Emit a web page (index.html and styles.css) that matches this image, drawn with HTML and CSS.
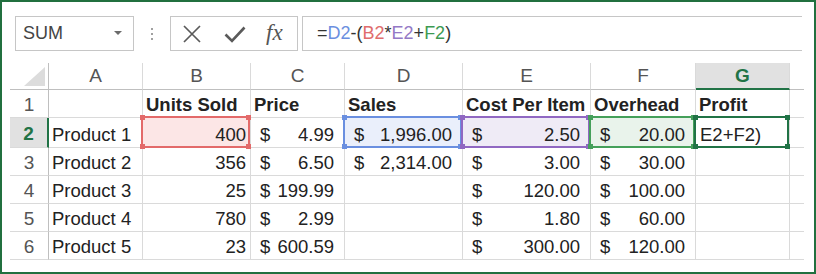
FILE: index.html
```html
<!DOCTYPE html>
<html lang="en">
<head>
    <meta charset="UTF-8">
    <title>Profit formula</title>
    <link rel="stylesheet" href="styles.css">
</head>
<body>
    <div class="frame">
        <div class="toolbar">
            <div class="namebox">
                <span>SUM</span>
                <svg class="caret" width="8" height="5" viewBox="0 0 8 5"><path d="M0 0 L8 0 L4 4 Z" fill="#6b6b6b"/></svg>
            </div>
            <div class="grip"><i></i><i></i><i></i></div>
            <div class="fxbox">
                <svg class="cancel" width="20" height="20" viewBox="0 0 20 20"><path d="M2 2 L18 18 M18 2 L2 18" stroke="#5a5a5a" stroke-width="1.7" fill="none"/></svg>
                <svg class="enter" width="22" height="18" viewBox="0 0 22 18"><path d="M1.5 8.5 L8 15 L20.5 1.5" stroke="#5a5a5a" stroke-width="2.6" fill="none"/></svg>
                <span class="fx">fx</span>
            </div>
            <div class="formula">=<span class="f-blue">D2</span>-(<span class="f-red">B2</span>*<span class="f-purple">E2</span>+<span class="f-green">F2</span>)</div>
        </div>

        <div class="sheet">
            <!-- column headers -->
            <div class="hd corner"><svg width="21" height="19" viewBox="0 0 21 19"><path d="M21 0 L21 19 L0 19 Z" fill="#dcdcdc"/></svg></div>
            <div class="hd">A</div>
            <div class="hd">B</div>
            <div class="hd">C</div>
            <div class="hd">D</div>
            <div class="hd">E</div>
            <div class="hd">F</div>
            <div class="hd sel">G</div>
            <div class="hd last"></div>

            <!-- row 1 -->
            <div class="rh">1</div>
            <div class="c"></div>
            <div class="c b">Units Sold</div>
            <div class="c b">Price</div>
            <div class="c b">Sales</div>
            <div class="c b">Cost Per Item</div>
            <div class="c b">Overhead</div>
            <div class="c b">Profit</div>
            <div class="c last"></div>

            <!-- row 2 -->
            <div class="rh sel">2</div>
            <div class="c">Product 1</div>
            <div class="c num ref red">400</div>
            <div class="c acct"><span>$</span><span>4.99</span></div>
            <div class="c acct ref blue"><span>$</span><span>1,996.00</span></div>
            <div class="c acct ref purple"><span>$</span><span>2.50</span></div>
            <div class="c acct ref green"><span>$</span><span>20.00</span></div>
            <div class="c ref active">E2+F2)</div>
            <div class="c last"></div>

            <!-- row 3 -->
            <div class="rh">3</div>
            <div class="c">Product 2</div>
            <div class="c num">356</div>
            <div class="c acct"><span>$</span><span>6.50</span></div>
            <div class="c acct"><span>$</span><span>2,314.00</span></div>
            <div class="c acct"><span>$</span><span>3.00</span></div>
            <div class="c acct"><span>$</span><span>30.00</span></div>
            <div class="c"></div>
            <div class="c last"></div>

            <!-- row 4 -->
            <div class="rh">4</div>
            <div class="c">Product 3</div>
            <div class="c num">25</div>
            <div class="c acct"><span>$</span><span>199.99</span></div>
            <div class="c"></div>
            <div class="c acct"><span>$</span><span>120.00</span></div>
            <div class="c acct"><span>$</span><span>100.00</span></div>
            <div class="c"></div>
            <div class="c last"></div>

            <!-- row 5 -->
            <div class="rh">5</div>
            <div class="c">Product 4</div>
            <div class="c num">780</div>
            <div class="c acct"><span>$</span><span>2.99</span></div>
            <div class="c"></div>
            <div class="c acct"><span>$</span><span>1.80</span></div>
            <div class="c acct"><span>$</span><span>60.00</span></div>
            <div class="c"></div>
            <div class="c last"></div>

            <!-- row 6 -->
            <div class="rh">6</div>
            <div class="c">Product 5</div>
            <div class="c num">23</div>
            <div class="c acct"><span>$</span><span>600.59</span></div>
            <div class="c"></div>
            <div class="c acct"><span>$</span><span>300.00</span></div>
            <div class="c acct"><span>$</span><span>120.00</span></div>
            <div class="c"></div>
            <div class="c last"></div>
        </div>
    </div>
</body>
</html>
```

FILE: styles.css
```css
body {
    margin: 0;
    background: #fff;
    font-family: 'Liberation Sans', Arial, sans-serif;
}

.frame {
    width: 816px;
    height: 274px;
    box-sizing: border-box;
    border: 2px solid #21703f;
    background: #fff;
    overflow: hidden;
}

/* formula bar */

.toolbar {
    display: flex;
    height: 35px;
    margin: 14px 0 0 13px;
}

.namebox {
    width: 119px;
    box-sizing: border-box;
    border: 1px solid #c6c6c6;
    display: flex;
    align-items: center;
    justify-content: space-between;
    padding: 0 11px 0 7px;
    font-size: 18px;
    color: #444;
}

.grip {
    width: 36px;
    display: flex;
    flex-direction: column;
    justify-content: center;
    align-items: center;
    gap: 3px;
}

.grip i {
    width: 2px;
    height: 2px;
    background: #a0a0a0;
}

.fxbox {
    position: relative;
    width: 128px;
    box-sizing: border-box;
    border: 1px solid #c6c6c6;
    display: flex;
    align-items: center;
    padding-left: 11px;
}

.cancel {
    margin-right: 22px;
}

.enter {
    margin-right: 20px;
    margin-top: 2px;
}

.fx {
    font-family: 'Liberation Serif', 'DejaVu Serif', serif;
    font-style: italic;
    font-size: 23px;
    color: #555;
    margin-top: -2px;
}

.formula {
    margin-left: 4px;
    width: 500px;
    box-sizing: border-box;
    border: 1px solid #c6c6c6;
    border-right: 0;
    padding-left: 14px;
    display: flex;
    align-items: center;
    font-size: 18px;
    color: #333;
}

.f-blue { color: #6b8fe0; }
.f-red { color: #e06d6d; }
.f-purple { color: #9479c6; }
.f-green { color: #3d9a52; }

/* grid */

.sheet {
    display: grid;
    grid-template-columns: 39px 94px 108px 94px 118px 128px 105px 94px 14px;
    grid-template-rows: 27px 28px 30px 28px 28px 28px 28px;
    margin: 12px 0 0 8px;
    font-size: 18.5px;
    color: #222;
}

.sheet > div {
    box-sizing: border-box;
    border-right: 1px solid #dadada;
    border-bottom: 1px solid #dadada;
}

.sheet > .last {
    border-right: 0;
}

.hd {
    display: flex;
    align-items: center;
    justify-content: center;
    font-size: 19px;
    color: #555;
    border-bottom-color: #bfbfbf !important;
}

.corner {
    justify-content: flex-end;
    align-items: flex-end;
    padding: 0 3px 3px 0;
    border-right-color: #bfbfbf !important;
}

.hd.sel {
    background: #e1e1e1;
    color: #217346;
    font-weight: bold;
    border-bottom: 2px solid #217346 !important;
}

.rh {
    display: flex;
    align-items: center;
    justify-content: center;
    font-size: 19px;
    color: #555;
    border-right-color: #bfbfbf !important;
    padding-top: 2px;
}

.rh.sel {
    background: #e1e1e1;
    color: #217346;
    font-weight: bold;
    border-right: 2px solid #217346 !important;
}

.c {
    display: flex;
    align-items: flex-end;
    padding: 0 3px 1px 3px;
    line-height: 22px;
    white-space: nowrap;
}

.c.b {
    font-weight: bold;
}

.c.num {
    justify-content: flex-end;
    padding-right: 4px;
}

.c.acct {
    justify-content: space-between;
    padding: 0 10px 1px 9px;
}

/* formula reference highlights */

.ref {
    position: relative;
}

.ref::before {
    content: '';
    position: absolute;
    inset: -2px 0 -1px -2px;
    border: 2px solid var(--ref);
}

.ref::after {
    content: '';
    position: absolute;
    inset: -3px -1px -2px -3px;
    background:
        linear-gradient(var(--ref), var(--ref)) left top / 5px 5px no-repeat,
        linear-gradient(var(--ref), var(--ref)) right top / 5px 5px no-repeat,
        linear-gradient(var(--ref), var(--ref)) left bottom / 5px 5px no-repeat,
        linear-gradient(var(--ref), var(--ref)) right bottom / 5px 5px no-repeat;
}

.ref.red { --ref: #e36a6a; background: #fce6e6; }
.ref.blue { --ref: #6a8fe0; background: #eaeffb; }
.ref.purple { --ref: #9068c2; background: #efebf6; }
.ref.green { --ref: #45a05a; background: #e9f3eb; }
.ref.active { --ref: #217346; background: #fff; padding-left: 4px; }
```
